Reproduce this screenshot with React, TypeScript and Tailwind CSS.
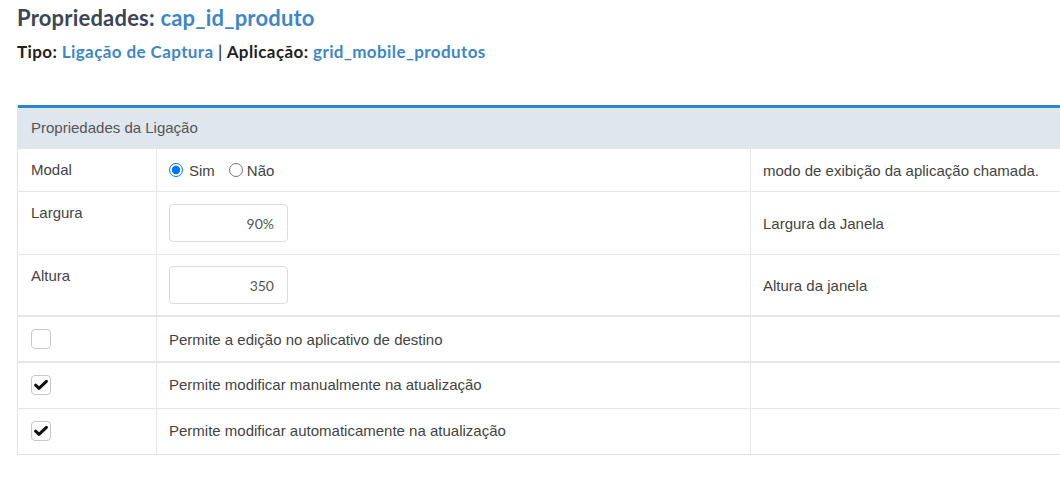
import React from "react";

const Check = ({ checked }: { checked: boolean }) => (
  <div className="w-[20px] h-[20px] rounded-[4px] border border-[#c8c8c8] bg-white flex items-center justify-center">
    {checked && (
      <svg width="14" height="12" viewBox="0 0 14 12">
        <path d="M1.6 6.2 L5 9.4 L12.4 2.3" fill="none" stroke="#111" strokeWidth="3" strokeLinecap="round" strokeLinejoin="round" />
      </svg>
    )}
  </div>
);

const cellL = "w-[139px] shrink-0 px-[13px] pt-[12px] border-r border-[#e6e6e6]";
const cellM = "w-[594px] shrink-0 px-[12px] flex items-center border-r border-[#e6e6e6]";
const cellR = "flex-1 px-[12px] flex items-center";

export default function App() {
  return (
    <div className="w-[1060px] h-[481px] overflow-hidden bg-white" style={{ fontFamily: "'Liberation Sans', Arial, sans-serif" }}>
      <div className="pl-[17px] pt-[3px]" style={{ fontFamily: "Lato, sans-serif" }}>
        <div className="text-[22px] font-bold leading-[30px] text-[#3a4656] tracking-[0.2px]">
          Propriedades: <span className="text-[#3d87c9]">cap_id_produto</span>
        </div>
        <div className="mt-[9px] text-[17px] font-bold leading-[20px] text-[#222] tracking-[0.4px]">
          Tipo: <span className="text-[#3d87c9]">Ligação de Captura</span> <span className="font-normal">|</span> Aplicação:{" "}
          <span className="text-[#3d87c9]">grid_mobile_produtos</span>
        </div>
      </div>

      <div className="ml-[17px] mt-[43px] w-[1100px] border-l border-[#e3e3e3] text-[15px] text-[#444]">
        <div className="h-[3px] bg-[#2a86d1]" />
        <div className="h-[41px] bg-[#dfe6ee] px-[13px] flex items-center text-[#555]">Propriedades da Ligação</div>

        <div className="flex h-[43px] border-b border-[#e6e6e6]">
          <div className={cellL + " leading-[18px] pt-[11px]"}>Modal</div>
          <div className={cellM}>
            <label className="flex items-center">
              <input type="radio" name="m" defaultChecked className="m-0 w-[14px] h-[14px]" />
              <span className="ml-[6px] mt-[2px]">Sim</span>
            </label>
            <label className="flex items-center ml-[14px]">
              <input type="radio" name="m" className="m-0 w-[14px] h-[14px]" />
              <span className="ml-[4px] mt-[2px]">Não</span>
            </label>
          </div>
          <div className={cellR + " pt-[2px]"}>modo de exibição da aplicação chamada.</div>
        </div>

        <div className="flex h-[63px] border-b border-[#e6e6e6]">
          <div className={cellL + " leading-[18px]"}>Largura</div>
          <div className={cellM}>
            <div className="w-[119px] h-[38px] rounded-[4px] border border-[#dcdcdc] flex items-center justify-end pr-[13px] text-[14px] text-[#555]" style={{ fontFamily: "Lato, sans-serif" }}>90%</div>
          </div>
          <div className={cellR + " pt-[2px]"}>Largura da Janela</div>
        </div>

        <div className="flex h-[62px] border-b-2 border-[#e6e6e6]">
          <div className={cellL + " leading-[18px]"}>Altura</div>
          <div className={cellM}>
            <div className="w-[119px] h-[38px] rounded-[4px] border border-[#dcdcdc] flex items-center justify-end pr-[13px] text-[14px] text-[#555]" style={{ fontFamily: "Lato, sans-serif" }}>350</div>
          </div>
          <div className={cellR + " pt-[2px]"}>Altura da janela</div>
        </div>

        <div className="flex h-[46px] border-b-2 border-[#e6e6e6]">
          <div className={cellL + " pt-[11px]"}><Check checked={false} /></div>
          <div className={cellM + " pt-[2px]"}>Permite a edição no aplicativo de destino</div>
          <div className={cellR} />
        </div>

        <div className="flex h-[46px] border-b border-[#e6e6e6]">
          <div className={cellL + " pt-[12px]"}><Check checked /></div>
          <div className={cellM}>Permite modificar manualmente na atualização</div>
          <div className={cellR} />
        </div>

        <div className="flex h-[46px] border-b border-[#e0e0e0]">
          <div className={cellL + " pt-[12px]"}><Check checked /></div>
          <div className={cellM}>Permite modificar automaticamente na atualização</div>
          <div className={cellR} />
        </div>
      </div>
    </div>
  );
}
